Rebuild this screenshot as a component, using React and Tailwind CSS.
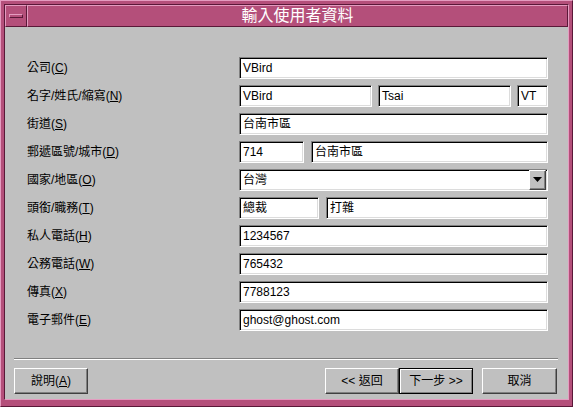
import React from "react";

const FONT = "font-['Liberation_Sans','Noto_Sans_CJK_TC',sans-serif]";

const Label = ({ text, mnemonic }) => (
  <div className="w-[234px] shrink-0 pl-[22px] flex items-center text-[12px] text-black">
    <span>
      {text}(<u>{mnemonic}</u>)
    </span>
  </div>
);

const Field = ({ value, className = "" }) => (
  <div
    className={`h-[22px] bg-white border border-t-[#808080] border-l-[#808080] border-b-white border-r-white shadow-[inset_1px_1px_0_#000,inset_-1px_-1px_0_#dcdcdc] flex items-center pl-[3px] text-[12px] text-black overflow-hidden whitespace-nowrap ${className}`}
  >
    {value}
  </div>
);

const Button = ({ children, isDefault = false, className = "w-[74px]" }) => (
  <div
    className={`h-[26px] flex items-center justify-center text-[12px] text-black bg-[#c0c0c0] ${
      isDefault
        ? "border border-black shadow-[inset_1px_1px_0_#fff,inset_-1px_-1px_0_#808080]"
        : "border border-t-white border-l-white border-b-[#404040] border-r-[#404040] shadow-[inset_-1px_-1px_0_#808080]"
    } ${className}`}
  >
    {children}
  </div>
);

const Row = ({ children }) => <div className="flex h-[22px]">{children}</div>;

export default function App() {
  return (
    <div
      className={`w-[573px] h-[407px] bg-[#b44f7a] border border-t-[#e49cc0] border-l-[#e49cc0] border-b-[#5a1838] border-r-[#5a1838] pt-[3px] pl-[3px] pr-[3px] pb-[6px] ${FONT}`}
    >
      <div className="h-full flex flex-col border border-t-[#5a1838] border-l-[#5a1838] border-b-[#e49cc0] border-r-[#e49cc0]">
        {/* title bar */}
        <div className="flex h-[22px]">
          <div className="w-[22px] border border-t-[#e49cc0] border-l-[#e49cc0] border-b-[#5a1838] border-r-[#5a1838] flex items-center justify-center">
            <div className="w-[14px] h-[4px] border border-t-[#e49cc0] border-l-[#e49cc0] border-b-[#5a1838] border-r-[#5a1838]" />
          </div>
          <div className="flex-1 border border-t-[#e49cc0] border-l-[#e49cc0] border-b-[#5a1838] border-r-[#5a1838] flex items-center justify-center text-white text-[16px] leading-none">
            輸入使用者資料
          </div>
        </div>

        {/* content */}
        <div className="flex-1 bg-[#c0c0c0] pt-[30px] flex flex-col">
          <div className="flex flex-col gap-[6px]">
            <Row>
              <Label text="公司" mnemonic="C" />
              <Field value="VBird" className="w-[309px]" />
            </Row>
            <Row>
              <Label text="名字/姓氏/縮寫" mnemonic="N" />
              <div className="w-[309px] flex gap-[6px]">
                <Field value="VBird" className="w-[133px]" />
                <Field value="Tsai" className="w-[133px]" />
                <Field value="VT" className="w-[31px]" />
              </div>
            </Row>
            <Row>
              <Label text="街道" mnemonic="S" />
              <Field value="台南市區" className="w-[309px]" />
            </Row>
            <Row>
              <Label text="郵遞區號/城市" mnemonic="D" />
              <div className="w-[309px] flex gap-[7px]">
                <Field value="714" className="w-[65px]" />
                <Field value="台南市區" className="flex-1" />
              </div>
            </Row>
            <Row>
              <Label text="國家/地區" mnemonic="O" />
              <div className="w-[309px] h-[22px] bg-white border border-t-[#808080] border-l-[#808080] border-b-white border-r-white shadow-[inset_1px_1px_0_#000,inset_-1px_-1px_0_#dcdcdc] flex items-center pl-[3px] pr-[1px] text-[12px]">
                <span className="flex-1">台灣</span>
                <div className="w-[17px] h-[20px] bg-[#c0c0c0] border border-t-white border-l-white border-b-[#404040] border-r-[#404040] shadow-[inset_-1px_-1px_0_#808080] flex items-center justify-center">
                  <svg width="9" height="6" viewBox="0 0 9 6">
                    <path d="M0 0 H9 L4.5 5 Z" fill="#000" />
                  </svg>
                </div>
              </div>
            </Row>
            <Row>
              <Label text="頭銜/職務" mnemonic="T" />
              <div className="w-[309px] flex gap-[7px]">
                <Field value="總裁" className="w-[80px]" />
                <Field value="打雜" className="flex-1" />
              </div>
            </Row>
            <Row>
              <Label text="私人電話" mnemonic="H" />
              <Field value="1234567" className="w-[309px]" />
            </Row>
            <Row>
              <Label text="公務電話" mnemonic="W" />
              <Field value="765432" className="w-[309px]" />
            </Row>
            <Row>
              <Label text="傳真" mnemonic="X" />
              <Field value="7788123" className="w-[309px]" />
            </Row>
            <Row>
              <Label text="電子郵件" mnemonic="E" />
              <Field value="ghost@ghost.com" className="w-[309px]" />
            </Row>
          </div>

          {/* separator */}
          <div className="mt-[27px] ml-[9px] mr-[10px] h-[2px] border-t border-t-[#808080] border-b border-b-white" />

          {/* buttons */}
          <div className="mt-[8px] flex pl-[9px] pr-[11px]">
            <Button>
              說明(<u>A</u>)
            </Button>
            <div className="flex-1" />
            <Button>&lt;&lt; 返回</Button>
            <Button isDefault>下一步 &gt;&gt;</Button>
            <Button className="ml-[9px] w-[75px]">取消</Button>
          </div>
        </div>
      </div>
    </div>
  );
}
